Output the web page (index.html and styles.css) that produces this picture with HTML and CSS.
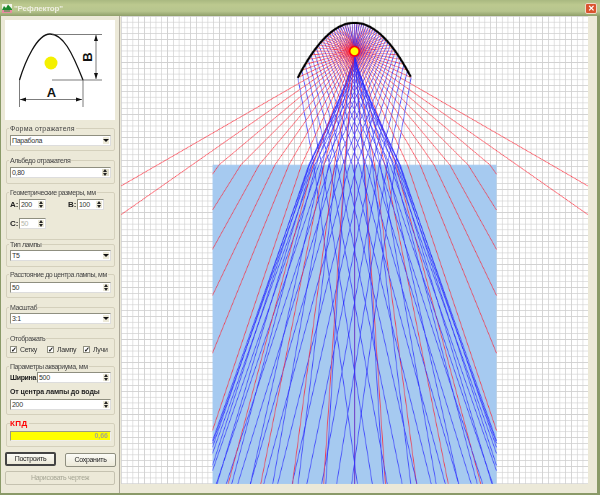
FILE: index.html
```html
<!DOCTYPE html>
<html lang="ru">
<head>
<meta charset="utf-8">
<title>Рефлектор</title>
<link rel="stylesheet" href="styles.css">
</head>
<body>
<div class="window">
  <header class="titlebar">
    <svg class="appicon" width="10" height="9" viewBox="0 0 10 9"><rect width="10" height="9" fill="#f4f4ea"/><path d="M0 6 L2 2 L4 4 L6 0.5 L10 5 V6 Z" fill="#1c8a2e"/><path d="M0 6h10v3H0z" fill="#e88aa0"/><path d="M2 6.500h6v1H2z" fill="#2a9a3a"/></svg>
    <span class="title">"Рефлектор"</span>
    <span class="close">✕</span>
  </header>
  <div class="body">
    <aside class="panel">
      <div class="preview">
        <svg width="110" height="100" viewBox="5 20 110 100">
          <path d="M19.500 80 C25 62 37 34 50 34 C63 34 72 52 83 80" fill="none" stroke="#111" stroke-width="1.300"/>
          <circle cx="51" cy="63" r="6.500" fill="#f4f000"/>
          <path d="M52 34.500H102M52 80H102M96 35V79M19.500 80V107M83 80V107M20 99.500H82" fill="none" stroke="#444" stroke-width="0.700"/>
          <path d="M96 35l-2 6h4zM96 79l-2-6h4zM20 99.500l6-2v4zM82 99.500l-6-2v4z" fill="#111"/>
          <text x="51.500" y="97" class="dim" text-anchor="middle">A</text>
          <text x="0" y="0" class="dim" text-anchor="middle" transform="translate(92 57) rotate(-90)">B</text>
        </svg>
      </div>

      <fieldset class="group g-shape"><legend>Форма отражателя</legend>
        <div class="field"><span class="val">Парабола</span><span class="drop"></span></div>
      </fieldset>

      <fieldset class="group g-albedo"><legend>Альбедо отражателя</legend>
        <div class="field"><span class="val">0,80</span><span class="spin wide"><i></i><b></b></span></div>
      </fieldset>

      <fieldset class="group g-geom"><legend>Геометрические размеры, мм</legend>
        <div class="geomrow">
          <strong>A:</strong><div class="field small"><span class="val">200</span><span class="spin"><i></i><b></b></span></div>
          <strong class="mid">B:</strong><div class="field small"><span class="val">100</span><span class="spin"><i></i><b></b></span></div>
        </div>
        <div class="geomrow second">
          <strong>C:</strong><div class="field small off"><span class="val">50</span><span class="spin"><i></i><b></b></span></div>
        </div>
      </fieldset>

      <fieldset class="group g-lamp"><legend>Тип лампы</legend>
        <div class="field"><span class="val">T5</span><span class="drop"></span></div>
      </fieldset>

      <fieldset class="group g-dist"><legend>Расстояние до центра лампы, мм</legend>
        <div class="field"><span class="val">50</span><span class="spin"><i></i><b></b></span></div>
      </fieldset>

      <fieldset class="group g-scale"><legend>Масштаб</legend>
        <div class="field"><span class="val">3:1</span><span class="drop"></span></div>
      </fieldset>

      <fieldset class="group g-show"><legend>Отображать</legend>
        <div class="checks">
          <label class="chk c1"><span class="box">✓</span>Сетку</label>
          <label class="chk c2"><span class="box">✓</span>Лампу</label>
          <label class="chk"><span class="box">✓</span>Лучи</label>
        </div>
      </fieldset>

      <fieldset class="group g-aqua"><legend>Параметры аквариума, мм</legend>
        <div class="aquarow"><strong>Ширина</strong><div class="field grow"><span class="val">500</span><span class="spin"><i></i><b></b></span></div></div>
        <div class="aqualabel"><strong>От центра лампы до воды</strong></div>
        <div class="field"><span class="val">200</span><span class="spin"><i></i><b></b></span></div>
      </fieldset>

      <div class="kpd">
        <div class="kpdlabel">КПД</div>
        <div class="kpdbar">0,66</div>
      </div>

      <div class="buttons">
        <button class="btn default">Построить</button>
        <button class="btn save">Сохранить</button>
      </div>
      <button class="btn draw" disabled>Нарисовать чертеж</button>
    </aside>
    <main class="stage"><canvas id="plot" width="467" height="468"></canvas></main>
  </div>
</div>
<script src="app.js"></script>
</body>
</html>
```
FILE: styles.css
```css
* { box-sizing: border-box; }
html, body { margin: 0; padding: 0; }
body { width: 600px; height: 495px; overflow: hidden; font: 7px/9px "Liberation Sans", Arial, sans-serif; letter-spacing: -0.3px; color: #222; background: #ece9d8; }
.window { width: 600px; height: 495px; display: flex; flex-direction: column; border: solid #8a9a68; border-width: 0 3px 2px 1px; background: #ece9d8; }
.titlebar { height: 16px; margin: 0 -3px 0 -1px; flex: none; display: flex; align-items: center; gap: 2px; padding: 0 3px 0 2px; filter: blur(0.35px);
  background: linear-gradient(#a9b880, #bcc98f 30%, #b7c58e 70%, #8f9f6a); }
.appicon { flex: none; }
.title { color: #eeeee0; font-size: 8px; font-weight: bold; flex: 1; letter-spacing: -0.2px; }
.close { width: 12px; height: 11px; border: 1px solid #f0d8c8; border-radius: 2px; background: #d9532e; color: #fff; font-size: 8px; line-height: 9px; text-align: center; font-weight: bold; letter-spacing: 0; }
.body { flex: 1; display: flex; min-height: 0; }
.panel { width: 119px; flex: none; padding: 4px 3px 0 4px; border-right: 1px solid #aca899; display: flex; flex-direction: column; filter: blur(0.35px); }
.preview { width: 110px; height: 100px; background: #fff; flex: none; }
.preview svg { display: block; }
.dim { font: bold 13px "Liberation Sans", Arial, sans-serif; fill: #111; letter-spacing: 0; }

.group { margin: 0 1px 0 1px; padding: 0 3px; border: 1px solid #d4d0bc; border-radius: 2px; min-width: 0; flex: none; }
.group legend { padding: 0 1px; margin-left: -1px; font-size: 7px; line-height: 9px; color: #444; white-space: nowrap; letter-spacing: -0.42px; }
.g-shape legend { letter-spacing: 0.2px; }
.g-shape { margin-top: 4px; height: 27px; padding-top: 2px; }
.g-albedo { margin-top: 5px; height: 28px; padding-top: 2px; }
.g-geom { margin-top: 4px; height: 52px; padding-top: 2px; }
.g-lamp { margin-top: 0; height: 27px; padding-top: 1px; }
.g-dist { margin-top: 3px; height: 28px; padding-top: 3px; }
.g-scale { margin-top: 5px; height: 26px; padding-top: 1px; }
.g-show { margin-top: 5px; height: 24px; padding-top: 2px; }
.g-aqua { margin-top: 4px; height: 53px; padding-top: 1px; }

.field { height: 11px; background: #fff; border: 1px solid #8f8f80; border-right-color: #ddd; border-bottom-color: #ddd; display: flex; align-items: center; justify-content: space-between; position: relative; }
.val { padding-left: 1px; color: #333; }
.drop, .spin { width: 8px; height: 9px; background: #ece9d8; flex: none; border: 1px solid #fff; position: relative; display: block; }
.drop::after { content: ""; position: absolute; left: 0; top: 2px; border: 3px solid transparent; border-top: 3px solid #111; border-bottom: 0; }
.spin i, .spin b { position: absolute; left: 1px; width: 0; height: 0; border: 2px solid transparent; }
.spin i { top: 0; border-bottom: 3px solid #222; border-top: 0; }
.spin b { bottom: 0; border-top: 3px solid #222; border-bottom: 0; }
.spin.wide { width: 9px; background: #dedbc8; }

.geomrow { display: flex; align-items: center; gap: 1px; }
.geomrow.second { margin-top: 8px; }
.geomrow strong { font-size: 8px; width: 8px; letter-spacing: 0; }
.geomrow .mid { margin-left: 21px; }
.field.small { width: 27px; }
.off .val { color: #b5b5a8; }

.checks { display: flex; }
.chk { display: flex; align-items: center; gap: 3px; color: #333; white-space: nowrap; }
.c1 { width: 37px; }
.c2 { width: 36px; }
.box { width: 7px; height: 7px; background: #fff; border: 1px solid #8f8f80; font-size: 7px; line-height: 5px; font-weight: bold; color: #111; text-align: center; overflow: hidden; display: block; letter-spacing: 0; }

.aquarow { display: flex; align-items: center; gap: 1px; }
.aquarow strong { width: 26px; font-size: 7px; letter-spacing: -0.35px; white-space: nowrap; }
.field.grow { flex: 1; }
.aqualabel { margin: 4px 0 3px; }
.aqualabel strong { letter-spacing: -0.1px; white-space: nowrap; }

.kpd { margin: 8px 1px 0; height: 24px; border: 1px solid #d4d0bc; border-radius: 2px; padding: 7px 3px 0; position: relative; flex: none; }
.kpdlabel { position: absolute; left: 3px; top: -4px; color: #f00; font-size: 8px; font-weight: bold; letter-spacing: 0.4px; line-height: 8px; background: #ece9d8; padding-right: 1px; }
.kpdbar { height: 10px; background: #ffff00; border: 1px solid #9a9a80; border-right-color: #eee; border-bottom-color: #eee; text-align: right; color: #a9a988; font-weight: bold; line-height: 8px; padding-right: 2px; letter-spacing: 0; }

.buttons { display: flex; justify-content: space-between; margin-top: 5px; flex: none; }
.btn { height: 14px; padding: 0; font: 7px/10px "Liberation Sans", Arial, sans-serif; letter-spacing: -0.3px; color: #222; background: linear-gradient(#fbfbf7, #ece9d8); border: 1px solid #8f8f80; border-radius: 2px; }
.btn.default { width: 51px; border: 2px solid #444; }
.btn.save { width: 51px; margin-top: 1px; }
.btn.draw { width: 110px; margin-top: 4px; flex: none; color: #a5a594; background: #ece9d8; border-color: #c5c2b0; }

.stage { flex: 1; min-width: 0; padding: 0 9px 8px 1px; display: flex; align-items: flex-start; }
#plot { display: block; background: #fff; flex: none; }
```
FILE: app.js
```js
(function () {
  // The plot is drawn opaque at full size, then shrunk to the window, which
  // gives the thin, soft lines of the original picture.
  var S = 5.77 / 8;
  var OW = 467, OH = 468;
  var off = document.createElement('canvas');
  off.width = Math.ceil(OW / S);
  off.height = Math.ceil(OH / S);
  var c = off.getContext('2d');
  c.fillStyle = '#fff';
  c.fillRect(0, 0, off.width, off.height);

  // grid: 8 px cells, 1 px lines
  c.fillStyle = '#d0d0d0';
  for (var gx = 0; gx < off.width; gx += 8) c.fillRect(gx, 0, 1, off.height);
  for (var gy = 0; gy < off.height; gy += 8) c.fillRect(0, gy, off.width, 1);

  c.scale(1 / S, 1 / S);
  c.translate(-121, -16);

  // 0.568 px per mm: reflector A=200, lamp 50 from the apex,
  // water 200 below the lamp and 500 wide
  var MM = 0.568;
  var cx = 354.5, ay = 22.8;
  var halfW = 100 * MM, k = 58.5;
  var L = { x: cx, y: ay + 50 * MM };
  var N = 1.33;
  var W = { l: cx - 250 * MM, r: cx + 250 * MM, t: L.y + 200 * MM, b: 484 };

  c.fillStyle = '#a6caf0';
  c.fillRect(W.l, W.t, W.r - W.l, W.b - W.t);

  function hitParabola(p, d) {
    var px = p.x - cx, py = p.y - ay;
    var A = d.x * d.x, B = 2 * px * d.x - k * d.y, C = px * px - k * py;
    var ts = [];
    if (Math.abs(A) < 1e-9) { if (Math.abs(B) > 1e-9) ts.push(-C / B); }
    else {
      var D = B * B - 4 * A * C;
      if (D >= 0) { D = Math.sqrt(D); ts.push((-B - D) / (2 * A), (-B + D) / (2 * A)); }
    }
    ts.sort(function (a, b) { return a - b; });
    for (var i = 0; i < ts.length; i++) {
      if (ts[i] > 0.01 && Math.abs(px + ts[i] * d.x) <= halfW) return ts[i];
    }
    return null;
  }

  function seg(a, b, col) {
    c.strokeStyle = col; c.beginPath(); c.moveTo(a.x, a.y); c.lineTo(b.x, b.y); c.stroke();
  }

  var RED = '#ff2030', BLUE = '#2828ff';

  function tail(p, d, col) {
    if (p.y < W.t && d.y > 0) {
      var t = (W.t - p.y) / d.y;
      var q = { x: p.x + t * d.x, y: W.t };
      if (q.x > W.l && q.x < W.r) {
        seg(p, q, col);
        var s = d.x / N, cy = Math.sqrt(1 - s * s);
        var nd = { x: s, y: cy };
        var tb = (W.b - q.y) / nd.y;
        var tw = nd.x < 0 ? (W.l - q.x) / nd.x : (W.r - q.x) / nd.x;
        var tt = Math.min(tb, tw);
        seg(q, { x: q.x + tt * nd.x, y: q.y + tt * nd.y }, col);
        return;
      }
    }
    seg(p, { x: p.x + 900 * d.x, y: p.y + 900 * d.y }, col);
  }

  c.lineWidth = 0.62;
  function trace(a) {
    var d = { x: Math.sin(a), y: Math.cos(a) };
    var p = L, col = RED, n = 0;
    while (n < 30) {
      var t = hitParabola(p, d);
      if (t === null) { tail(p, d, col); return; }
      var h = { x: p.x + t * d.x, y: p.y + t * d.y };
      seg(p, h, col);
      var tx = 1, ty = 2 * (h.x - cx) / k, m = Math.sqrt(tx * tx + ty * ty);
      tx /= m; ty /= m;
      var dp = d.x * tx + d.y * ty;
      d = { x: 2 * dp * tx - d.x, y: 2 * dp * ty - d.y };
      p = h; col = BLUE; n++;
    }
  }
  for (var i = 0; i < 72; i++) trace(i * 5 * Math.PI / 180);

  // reflector
  c.strokeStyle = '#000';
  c.lineWidth = 2.1;
  c.beginPath();
  for (var dx = -halfW; dx <= halfW + 0.01; dx += 1) {
    var yy = ay + dx * dx / k;
    if (dx === -halfW) c.moveTo(cx + dx, yy); else c.lineTo(cx + dx, yy);
  }
  c.stroke();

  // lamp
  c.fillStyle = '#ff0000';
  c.beginPath(); c.arc(L.x, L.y, 5.5, 0, 7); c.fill();
  c.fillStyle = '#ffff00';
  c.beginPath(); c.arc(L.x, L.y, 4, 0, 7); c.fill();

  var out = document.getElementById('plot').getContext('2d');
  out.imageSmoothingEnabled = true;
  out.imageSmoothingQuality = 'high';
  out.drawImage(off, 0, 0, off.width * S, off.height * S);
})();
```
